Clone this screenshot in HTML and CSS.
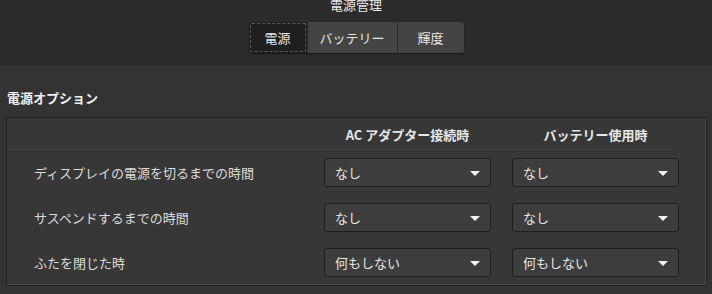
FILE: index.html
```html
<!DOCTYPE html>
<html lang="ja">
<head>
<meta charset="UTF-8" />
<title>電源管理</title>
<link rel="stylesheet" href="styles.css">
</head>
<body>
<div class="window">
  <header class="top">
    <div class="title">電源管理</div>
    <nav class="tabs">
      <button class="tab active" style="width:58px">電源</button>
      <button class="tab" style="width:90px">バッテリー</button>
      <button class="tab" style="width:67px">輝度</button>
    </nav>
  </header>

  <main class="content">
    <h2 class="section">電源オプション</h2>
    <div class="frame">
      <div class="grid head">
        <div></div>
        <div class="colhead">AC アダプター接続時</div>
        <div class="colhead">バッテリー使用時</div>
      </div>
      <div class="sep"></div>
      <div class="grid rows">
        <div class="label">ディスプレイの電源を切るまでの時間</div>
        <div class="combo"><span>なし</span><i class="arrow"></i></div>
        <div class="combo"><span>なし</span><i class="arrow"></i></div>

        <div class="label">サスペンドするまでの時間</div>
        <div class="combo"><span>なし</span><i class="arrow"></i></div>
        <div class="combo"><span>なし</span><i class="arrow"></i></div>

        <div class="label">ふたを閉じた時</div>
        <div class="combo"><span>何もしない</span><i class="arrow"></i></div>
        <div class="combo"><span>何もしない</span><i class="arrow"></i></div>
      </div>
    </div>
  </main>
</div>
</body>
</html>
```

FILE: styles.css
```css
/* base */
* {
  box-sizing: border-box;
}
html, body {
  margin: 0;
  height: 100%;
}
body {
  font-family: "Noto Sans CJK JP", "Noto Sans", sans-serif;
  font-size: 13px;
  color: #e2e2e2;
  background: #333333;
  overflow: hidden;
}

/* header bar with tabs */
.top {
  height: 65px;
  background: #2b2b2b;
  display: flex;
  flex-direction: column;
  align-items: center;
}
.title {
  margin-top: -5px;
  height: 19px;
  line-height: 19px;
  font-size: 13px;
  color: #e8e8e8;
}
.tabs {
  display: flex;
  margin-top: 8px;
  border-radius: 3px;
  box-shadow: 0 1px 1px rgba(0,0,0,0.4);
}
.tab {
  font-family: inherit;
  font-size: 13px;
  color: #e6e6e6;
  height: 31px;
  padding: 0;
  background: #444444;
  border: none;
  border-left: 1px solid #2a2a2a;
  cursor: pointer;
}
.tab:first-child {
  border-left: none;
  border-radius: 3px 0 0 3px;
}
.tab:last-child {
  border-radius: 0 3px 3px 0;
}
.tab.active {
  background: #1f1f1f;
  outline: 1px dashed #5a5a5a;
  outline-offset: -2px;
}

/* content */
.content {
  padding: 0 5px 0 6px;
}
.section {
  margin: 0;
  padding: 23px 0 0 1px;
  height: 52px;
  font-size: 13px;
  font-weight: 700;
  line-height: 19px;
  color: #f0f0f0;
}
.frame {
  background: #373737;
  border: 1px solid #222222;
  box-shadow: inset -1px -1px 0 #4a4a4a;
  height: 169px;
  padding-bottom: 8px;
}
.grid {
  display: grid;
  grid-template-columns: 1fr 167px 167px;
  column-gap: 21px;
  padding: 0 27px 0 27px;
}
.head {
  height: 31px;
  align-items: center;
}
.colhead {
  text-align: center;
  font-weight: 700;
  color: #e6e6e6;
  padding-top: 2px;
}
.sep {
  height: 1px;
  background: #2c2c2c;
  border-bottom: 1px solid #3f3f3f;
  margin-right: 33px;
}
.rows {
  padding-top: 8px;
  row-gap: 16px;
  align-items: center;
}
.label {
  color: #dcdcdc;
}
.combo {
  height: 29px;
  background: #3d3d3d;
  border: 1px solid #1e1e1e;
  border-radius: 3px;
  display: flex;
  align-items: center;
  justify-content: space-between;
  padding: 0 10px 0 10px;
  color: #e6e6e6;
}
.arrow {
  width: 0;
  height: 0;
  border-left: 5px solid transparent;
  border-right: 5px solid transparent;
  border-top: 5px solid #f0f0f0;
  margin-top: 1px;
}
```
